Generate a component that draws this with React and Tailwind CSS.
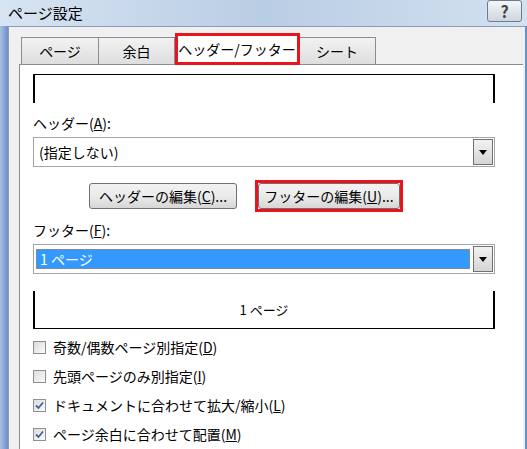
const F = { fontFamily: '"Noto Sans CJK JP","Liberation Sans",sans-serif' };

function Check({ checked, children }) {
  return (
    <div className="flex items-center h-[29px]">
      <div className="w-[13px] h-[13px] border border-[#8e8f8f] bg-gradient-to-br from-[#dcdcdc] to-[#fbfbfb] flex items-center justify-center">
        {checked && (
          <svg width="9" height="9" viewBox="0 0 9 9"><path d="M1 4.5 L3.5 7 L8 1.5" stroke="#4a5f97" strokeWidth="1.8" fill="none" /></svg>
        )}
      </div>
      <span className="ml-[7px] text-[14px] text-black">{children}</span>
    </div>
  );
}

function Select({ value, selected }) {
  return (
    <div className="flex h-[30px] w-[462px] border border-[#a5a5a5] bg-white">
      <div className={`flex-1 flex items-center px-[2px] ${selected ? '' : ''}`}>
        <div className={`w-full h-[20px] flex items-center pl-[3px] text-[14px] ${selected ? 'bg-[#3399ff] text-white border border-dotted border-[#c08040]' : 'text-black'}`}>{value}</div>
      </div>
      <div className="w-[20px] m-[1px] border border-[#707070] bg-gradient-to-b from-[#f2f2f2] to-[#d5d5d5] flex items-center justify-center">
        <svg width="8" height="5" viewBox="0 0 8 5"><path d="M0 0 H8 L4 5 Z" fill="#000" /></svg>
      </div>
    </div>
  );
}

function Btn({ children, red }) {
  return (
    <div className={red ? 'border-[3px] border-[#e8141e] p-0' : 'border-[3px] border-transparent'}>
      <div className={`h-[26px] ${red ? 'w-[142px]' : 'w-[148px]'} border border-[#707070] rounded-[3px] bg-gradient-to-b from-[#f2f2f2] via-[#ebebeb] to-[#d6d6d6] flex items-center justify-center text-[14px] text-black`}>{children}</div>
    </div>
  );
}

export default function App() {
  return (
    <div style={F} className="w-[527px] h-[449px] bg-[#c9d9ec] flex flex-col overflow-hidden">
      <div className="h-[29px] flex items-center justify-between bg-gradient-to-r from-[#d7e4f2] via-[#b9cde4] to-[#d3e1f0] pl-[8px] pr-[5px]">
        <span className="text-[15px] text-black">ページ設定</span>
        <div className="w-[35px] h-[22px] -mt-[4px] border border-[#6d7b8d] rounded-[3px] bg-gradient-to-b from-[#f4f6f9] to-[#cfd6df] flex items-center justify-center text-[16px] font-bold text-[#444]">?</div>
      </div>
      <div className="flex-1 flex">
        <div className="w-[8px] bg-gradient-to-r from-[#a9c2e2] to-[#6b8fcc]" />
        <div className="flex-1 bg-[#f0f0f0] border-l border-t border-[#8a9cb8] pl-[10px] pt-[5px] flex flex-col">
          <div className="flex items-end h-[32px] pl-[2px]">
            <div className="w-[78px] h-[27px] border border-[#898c95] border-b-0 bg-gradient-to-b from-[#f2f2f2] to-[#dedede] flex items-center justify-center text-[14px]">ページ</div>
            <div className="w-[76px] h-[27px] border border-[#898c95] border-b-0 border-l-0 bg-gradient-to-b from-[#f2f2f2] to-[#dedede] flex items-center justify-center text-[14px]">余白</div>
            <div className="relative w-[124px] h-[32px] bg-white border-x border-t border-[#898c95] flex items-center justify-center text-[14px] z-10 -mb-px">
              ヘッダー/フッター
              <div className="absolute -left-[1px] -top-[1px] w-[125px] h-[32px] border-[3px] border-[#e8141e]" />
            </div>
            <div className="w-[77px] h-[27px] border border-[#898c95] border-b-0 border-l-0 bg-gradient-to-b from-[#f2f2f2] to-[#dedede] flex items-center justify-center text-[14px]">シート</div>
          </div>
          <div className="flex-1 bg-white border border-[#898c95] border-b-0 border-r-0 mr-[2px] pl-[13px] pt-[9px] flex flex-col">
            <div className="w-[462px] h-[29px] border-t border-x-2 border-black" />
            <div className="mt-[10px] text-[14px] h-[20px]">ヘッダー(<u>A</u>):</div>
            <div className="mt-[4px]"><Select value="(指定しない)" /></div>
            <div className="mt-[13px] flex pl-[53px] gap-[15px]">
              <Btn>ヘッダーの編集(<u>C</u>)...</Btn>
              <Btn red>フッターの編集(<u>U</u>)...</Btn>
            </div>
            <div className="mt-[8px] text-[14px] h-[20px]">フッター(<u>F</u>):</div>
            <div className="mt-[4px]"><Select value="1 ページ" selected /></div>
            <div className="mt-[17px] w-[462px] h-[38px] border-b border-x-2 border-black flex items-center justify-center text-[13px]">1 ページ</div>
            <div className="mt-[4px]">
              <Check>奇数/偶数ページ別指定(<u>D</u>)</Check>
              <Check>先頭ページのみ別指定(<u>I</u>)</Check>
              <Check checked>ドキュメントに合わせて拡大/縮小(<u>L</u>)</Check>
              <Check checked>ページ余白に合わせて配置(<u>M</u>)</Check>
            </div>
          </div>
        </div>
        <div className="w-[2px] bg-[#6b8fcc]" />
      </div>
    </div>
  );
}
